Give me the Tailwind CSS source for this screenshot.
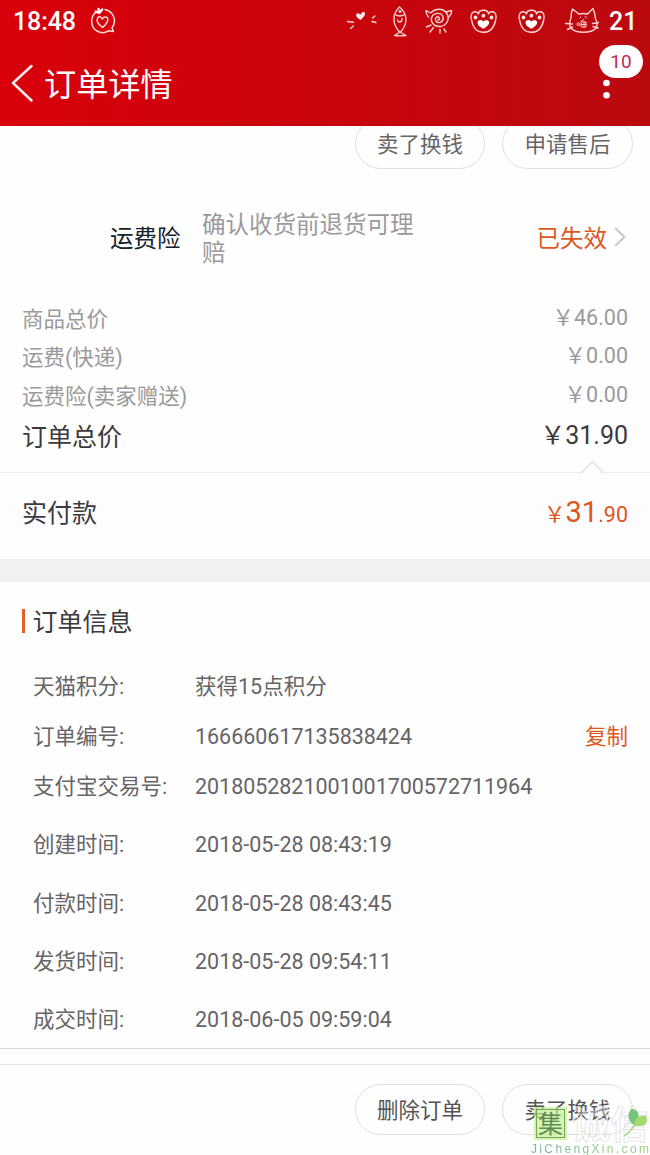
<!DOCTYPE html>
<html lang="zh-CN">
<head>
<meta charset="utf-8">
<title>订单详情</title>
<script src="https://cdn.jsdelivr.net/npm/@tailwindcss/browser@4"></script>
</head>
<body class="bg-[#fefefe]">
<div class="relative flex h-[1155px] w-[650px] flex-col overflow-hidden bg-[#fefefe] font-['Roboto','Noto_Sans_CJK_SC',sans-serif] text-[21.5px] text-[#666466]">

  <header class="h-[126px] shrink-0 bg-linear-to-r from-[#d9000b] via-[#c9040c] to-[#bb0910] text-white">
    <div class="flex h-[42px] items-center pl-[13px] pr-[13px]">
      <span class="w-[77px] pt-[1px] text-[25px] leading-[42px] font-medium tracking-[-0.1px]">18:48</span>
      <svg class="h-[28px] w-[28px]" viewBox="0 0 28 28" fill="none" stroke="#ffd9d4" stroke-width="1.5" stroke-linecap="round" stroke-linejoin="round">
        <path d="M6.500 5C0 9 0 20 7 24c4 2.500 8 2 11.500-.2l5 .7-1.500-3.500C27 14.500 24 4.500 15 2.500"/>
        <path d="M12.500 20.500C8 17 6 13.500 7.800 10.800c1.400-1.800 3.800-1 4.400 1.200 1.600-2.700 5-2.600 5.600-.2.400 2.600-2.200 6-5.300 8.700z"/>
        <path d="M9.200 6L5.800 4.500M9.200 6L8.500 2M9.200 6l3-3.500" stroke="#fff" stroke-width="2.400"/>
      </svg>
      <div class="grow"></div>
      <svg class="h-[34px] w-[255px]" viewBox="345 3 255 34" fill="none" stroke="#ffd2cd" stroke-width="1.400" stroke-linecap="round" stroke-linejoin="round">
        <path d="M360.500 19c-3-1.800-5.500-4.500-4-6.300 1.500-1.200 3.200-.2 3.900 1.200.6-2.400 2.600-3.600 4.300-2.500 1.400 1.700-1.300 5.100-4.200 7.600z" fill="#ffe9e6" stroke="none"/>
        <path d="M347.500 20.500l6 .7M350.500 27.500l3-2.500M372.500 17l2.500-2M372 20.500l4 1"/>
        <path d="M399.500 6c-7.500 7-7.500 17 .5 25.500 8-8 8-18.500-.5-25.500zM395 13.500q5 3 9.500 0M400 31l-5.500 3.500q5 .8 11.500 0zM397.500 19q.5 3 3.500 1.500M402 17.500q.2 3-2 3.500"/>
        <circle cx="400" cy="10.300" r=".8" fill="#fff"/>
        <path d="M430.500 12l-4.500-2.500q0 4 2.500 6.500M445.500 11l6-1.500q.5 4-3.500 7M431 11.500c5-4.500 12-4.500 15.500.5 4 6 0 13-6 13.500-7 .3-10.500-5-8.500-9.800 2.500-5 10.500-4.200 11.200 1 .3 4.300-4.700 6.300-7.200 3.500-1.700-3 1-5.500 3.200-3.700 1 1.500 0 2.700-1.300 2.200M431 24l-4.500 2M433.500 26.500l-3.500 4.500M440 28.500v3.500M444 28l2 3"/>
        <g id="paw">
          <path d="M478.500 13c-.8-2.500-4-3-6-1.200-1.800 2-1.700 5-.8 7.700C473 27 477 31.300 483.500 31.300S494 27 495.500 19.500c.8-2.700 1-5.700-.8-7.700-2-1.800-5.200-1.300-6.200 1.200-.2-2.500-2-3.800-5-3.800s-4.800 1.300-5 3.800z"/>
          <path d="M483.500 27.800c-4.500-2-7.300-5-5.300-8 1.500-1.500 4.300-.8 5.200.8 1.300-1.800 4.600-2 5.600 0 .9 2.600-2 5.200-5.500 7.200z" fill="#fff" stroke="none"/>
          <circle cx="475.500" cy="16.500" r="1.900" fill="#ffe2df" stroke="none"/><circle cx="483.400" cy="14.700" r="1.900" fill="#ffe2df" stroke="none"/><circle cx="491.500" cy="16.500" r="1.900" fill="#ffe2df" stroke="none"/>
        </g>
        <use href="#paw" x="48"/>
        <path d="M571 17q0-5 1.500-9l6.500 5q5-1 8.500 0L593 7.500q2 4.500 2.500 10M571 17c-4 9 1 14.300 12.500 14.300S600 26 595.500 17.500M565.500 22.500l7 .5M567.500 28.500l5-2.500M598.500 21.500l-6 1M598 27l-5-1.500"/>
        <path d="M577 22.500q1-2 2.500 0t-1.500 2zM581 20.500l3-2M581.500 21h4.500v5h-4.500zM584 21v5M581.500 23.500h4.500M580 17l1-1M585 15.500l1.500 1" stroke-width="1"/>
      </svg>
      <span class="ml-[9px] w-[28px] pt-[1px] text-[25px] leading-[42px] font-medium">21</span>
    </div>
    <div class="flex h-[84px] items-center pl-[10px]">
      <svg class="-mt-[2px] h-[38px] w-[24px]" viewBox="0 0 24 38" fill="none" stroke="#ffeceb" stroke-width="2.500" stroke-linecap="round" stroke-linejoin="round"><path d="M21.500 2L3 19l18.500 17.500"/></svg>
      <h1 class="ml-[10px] pt-[1px] text-[32.200px] leading-[84px]">订单详情</h1>
    </div>
    <svg class="absolute left-[600px] top-[78px] h-[24px] w-[14px]" viewBox="0 0 14 24" fill="#fff"><circle cx="6.500" cy="5" r="3.300"/><circle cx="6.500" cy="17.300" r="3.300"/></svg>
    <div class="absolute left-[599px] top-[45px] flex h-[33px] w-[44px] items-center justify-center rounded-full bg-white pt-[1px] text-[19px] text-[#c32a55]">10</div>
  </header>

  <div class="flex h-[43px] shrink-0 items-end justify-end gap-[17px] overflow-hidden pr-[17px]">
    <div class="flex h-[51px] w-[130px] shrink-0 items-center justify-center rounded-full border border-[#dedde0] pt-[3px]">卖了换钱</div>
    <div class="flex h-[51px] w-[131px] shrink-0 items-center justify-center rounded-full border border-[#dedde0] pt-[3px]">申请售后</div>
  </div>

  <div class="flex h-[137px] shrink-0 items-center pl-[110px] pr-[23px] text-[23.5px]">
    <span class="w-[92px] pt-[5px] text-[#14212b]">运费险</span>
    <span class="w-[230px] pt-[2px] leading-[28px] text-[#9b999b]">确认收货前退货可理<br>赔</span>
    <span class="ml-auto pt-[5px] text-[#dd571c]">已失效</span>
    <svg class="ml-[6px] h-[22px] w-[14px]" viewBox="0 0 14 22" fill="none" stroke="#c8c7ca" stroke-width="2"><path d="M2 1l9.500 9L2 19"/></svg>
  </div>

  <div class="relative flex h-[167px] shrink-0 flex-col border-b border-[#eeedf0] px-[22px] text-[#9b999b]">
    <div class="-mt-[7px] flex h-[38.500px] items-center justify-between"><span class="pt-[4px]">商品总价</span><span>￥46.00</span></div>
    <div class="flex h-[38.500px] items-center justify-between"><span class="pt-[3px]">运费(快递)</span><span class="pb-[1px]">￥0.00</span></div>
    <div class="flex h-[38.500px] items-center justify-between"><span class="pt-[3px]">运费险(卖家赠送)</span><span>￥0.00</span></div>
    <div class="flex h-[43px] items-center justify-between text-[25px] text-[#3c3a3d]"><span class="pt-[4px]">订单总价</span><span>￥31.90</span></div>
    <svg class="absolute left-[580px] top-[154px] h-[14px] w-[26px]" viewBox="0 0 26 14"><path d="M1 13L12.500 1.500 24 13" fill="#fdfcfe" stroke="#e2e1e4" stroke-width="1.500"/></svg>
  </div>

  <div class="flex h-[86px] shrink-0 items-center justify-between bg-[#fdfcfe] px-[22px] pb-[5px] text-[25px] text-[#3c3a3d]">
    <span>实付款</span>
    <span class="pb-[2px] text-[21.5px] text-[#dd571c]">￥<span class="text-[29px]">31</span>.90</span>
  </div>
  <div class="h-[23px] shrink-0 bg-[#f1f0f3]"></div>

  <section class="flex h-[467px] shrink-0 flex-col border-b border-[#d6d5d8] pl-[22px] pr-[22px]">
    <div class="flex h-[80px] items-center text-[25px] text-[#3c3a3d]"><i class="mr-[8px] -mt-[2px] h-[24px] w-[2.500px] bg-[#e0622a]"></i><span class="pt-[1px]">订单信息</span></div>
    <div class="flex h-[50px] items-center pl-[11px]"><span class="w-[162px]">天猫积分:</span><span>获得15点积分</span></div>
    <div class="flex h-[50px] items-center pl-[11px] pt-[2px]"><span class="w-[162px]">订单编号:</span><span class="tracking-[-0.03px]">166660617135838424</span><span class="ml-auto text-[#dd571c]">复制</span></div>
    <div class="flex h-[50px] items-center pl-[11px] pt-[2px]"><span class="w-[162px]">支付宝交易号:</span><span class="tracking-[-0.04px]">2018052821001001700572711964</span></div>
    <div class="mt-[4px] flex h-[58.400px] items-center pl-[11px] pt-[2px]"><span class="w-[162px]">创建时间:</span><span>2018-05-28 08:43:19</span></div>
    <div class="flex h-[58.400px] items-center pl-[11px] pt-[3px]"><span class="w-[162px]">付款时间:</span><span>2018-05-28 08:43:45</span></div>
    <div class="flex h-[58.400px] items-center pl-[11px] pt-[3px]"><span class="w-[162px]">发货时间:</span><span>2018-05-28 09:54:11</span></div>
    <div class="flex h-[58.400px] items-center pl-[11px] pt-[2px]"><span class="w-[162px]">成交时间:</span><span>2018-06-05 09:59:04</span></div>
  </section>

  <footer class="mt-[15px] flex h-[91px] shrink-0 items-center justify-end gap-[17px] border-t border-[#e8e7ea] pb-[2px] pr-[17px]">
    <div class="flex h-[51px] w-[130px] items-center justify-center rounded-full border border-[#dedde0] pt-[4px] text-[#555355]">删除订单</div>
    <div class="flex h-[51px] w-[131px] items-center justify-center rounded-full border border-[#dedde0] pt-[4px] text-[#555355]">卖了换钱</div>
  </footer>

  <div class="absolute left-[534px] top-[1107px] flex h-[33px] w-[33px] items-center justify-center bg-[#c5ee92]/70">
    <div class="flex h-[29px] w-[29px] items-center justify-center border-[1.500px] border-[#6b9c56]/90 pt-[1px] text-[25px] leading-none text-[#4f8048]/90">集</div>
  </div>
  <div class="absolute left-[572px] top-[1105px] text-[38px] leading-[40px] font-bold text-white/30 [-webkit-text-stroke:0.7px_#dfdbdf]">诚信</div>
  <svg class="absolute left-[620px] top-[1107px] h-[32px] w-[28px]" viewBox="0 0 28 32"><path d="M14 18C7 14 7 5 12 1.500c6 1.500 8 6 6 11z" fill="#76c47d"/><path d="M14 19c0-8 5-11 12-10 3 5 0 10-6 10-3 0-5 0-6 0z" fill="#a4dc72"/><path d="M16 15Q12 24 4 29" fill="none" stroke="#a4d57e" stroke-width="1.500"/></svg>
  <div class="absolute left-[531px] top-[1142px] bg-linear-to-r from-[#79b5a0] to-[#a3cf78] bg-clip-text font-['Liberation_Sans',sans-serif] text-[12px] leading-[15px] tracking-[2.350px] whitespace-nowrap text-transparent">JiChengXin.com</div>
</div>
</body>
</html>
